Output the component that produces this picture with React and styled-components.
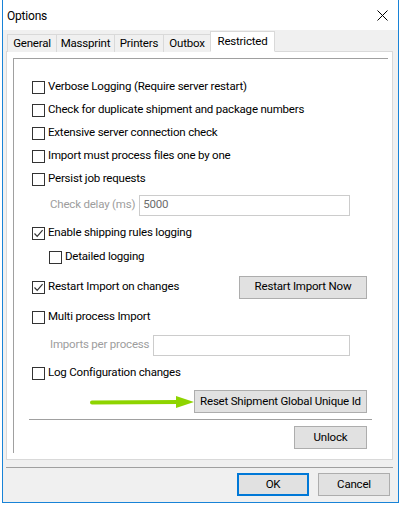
import styled, { createGlobalStyle } from "styled-components";

const GlobalStyle = createGlobalStyle`
  html, body {
    margin: 0;
    padding: 0;
    background: #ffffff;
  }
  body {
    font-family: Roboto, "Noto Sans", sans-serif;
    font-size: 11.5px;
    letter-spacing: -0.2px;
    color: #000;
  }
  * {
    box-sizing: border-box;
  }
`;

const Window = styled.div`
  margin-left: 2px;
  width: 397px;
  height: 503px;
  border: 1px solid #1883d7;
  border-top: none;
  background: #f0f0f0;
  display: flex;
  flex-direction: column;
`;

const TitleBar = styled.div`
  height: 30px;
  background: #ffffff;
  display: flex;
  align-items: center;
  justify-content: space-between;
  padding: 1px 10px 0 4px;
  flex-shrink: 0;
`;

const Title = styled.span`
  font-size: 12px;
  line-height: 1;
`;

const Content = styled.div`
  flex: 1;
  display: flex;
  flex-direction: column;
  padding: 1px 5px 0 3px;
`;

const TabStrip = styled.div`
  display: flex;
  align-items: flex-end;
  height: 21px;
  padding-left: 1px;
  margin-bottom: -1px;
  position: relative;
  z-index: 1;
`;

const Tab = styled.div`
  width: ${(p) => p.$w}px;
  height: ${(p) => (p.$active ? "21px" : "18px")};
  padding-top: ${(p) => (p.$active ? "1px" : "0")};
  margin-left: ${(p) => (p.$first ? "0" : "-1px")};
  border: 1px solid #d9d9d9;
  border-bottom: ${(p) => (p.$active ? "1px solid #ffffff" : "none")};
  background: ${(p) => (p.$active ? "#ffffff" : "#f0f0f0")};
  display: flex;
  align-items: center;
  justify-content: center;
  line-height: 1;
  white-space: nowrap;
  position: relative;
  z-index: ${(p) => (p.$active ? 2 : 1)};
`;

const Page = styled.div`
  height: 409px;
  border: 1px solid #d9d9d9;
  background: #ffffff;
  display: flex;
  flex-direction: column;
`;

const Group = styled.div`
  flex: 1;
  margin: 6px 4px 6px 6px;
  border-left: 1px solid #a0a0a0;
  border-top: 1px solid #a0a0a0;
  display: flex;
  flex-direction: column;
  padding: 17px 21px 0 18px;
`;

const Row = styled.div`
  height: ${(p) => p.$h || 22}px;
  margin-top: ${(p) => p.$mt || 0}px;
  padding-left: ${(p) => p.$indent || 0}px;
  display: flex;
  align-items: center;
  justify-content: ${(p) => (p.$between ? "space-between" : p.$end ? "flex-end" : "flex-start")};
  flex-shrink: 0;
`;

const CheckLabel = styled.label`
  display: flex;
  align-items: center;
  gap: 3px;
  line-height: 1;
  white-space: nowrap;
`;

const Box = styled.span`
  width: 13px;
  height: 13px;
  border: 1px solid #333333;
  background: #ffffff;
  display: inline-flex;
  align-items: center;
  justify-content: center;
  flex-shrink: 0;
`;

const FieldLabel = styled.span`
  color: #9d9d9d;
  white-space: nowrap;
  line-height: 1;
`;

const Field = styled.div`
  flex: 1;
  height: 21px;
  margin-left: 4px;
  margin-right: 17px;
  border: 1px solid #cccccc;
  background: #ffffff;
  color: #6d6d6d;
  display: flex;
  align-items: center;
  padding-left: 3px;
  line-height: 1;
`;

const Button = styled.button`
  width: ${(p) => p.$w}px;
  height: 23px;
  border: 1px solid ${(p) => (p.$default ? "#0078d7" : "#adadad")};
  box-shadow: ${(p) => (p.$default ? "inset 0 0 0 1px #0078d7" : "none")};
  background: #e1e1e1;
  font-family: inherit;
  font-size: 11.5px;
  letter-spacing: -0.2px;
  color: #000;
  padding: 0;
  line-height: 1;
  white-space: nowrap;
  flex-shrink: 0;
`;

const Separator = styled.div`
  height: 1px;
  background: #a0a0a0;
  margin: ${(p) => p.$margin};
  flex-shrink: 0;
`;

const Footer = styled.div`
  display: flex;
  justify-content: flex-end;
  gap: 9px;
  margin-top: 5px;
  padding-right: 3px;
`;

const Check = ({ checked }) => (
  <Box>
    {checked && (
      <svg width="11" height="11" viewBox="0 0 11 11">
        <path d="M1.5 5.5 L4.2 8.3 L9.6 2.2" fill="none" stroke="#333" strokeWidth="1.2" />
      </svg>
    )}
  </Box>
);

const CheckRow = ({ label, checked, mt, indent }) => (
  <Row $mt={mt} $indent={indent}>
    <CheckLabel>
      <Check checked={checked} />
      {label}
    </CheckLabel>
  </Row>
);

const Arrow = () => (
  <svg width="104" height="16" viewBox="0 0 104 16">
    <line x1="2" y1="8.5" x2="90" y2="8" stroke="#8ed400" strokeWidth="4" strokeLinecap="round" />
    <polygon points="86,2 104,8 86,14" fill="#8ed400" />
  </svg>
);

const tabs = [
  { name: "General", w: 50 },
  { name: "Massprint", w: 59 },
  { name: "Printers", w: 50 },
  { name: "Outbox", w: 48 },
  { name: "Restricted", w: 65, active: true },
];

const App = () => {
  return (
    <>
      <GlobalStyle />
      <Window>
        <TitleBar>
          <Title>Options</Title>
          <svg width="11" height="11" viewBox="0 0 11 11">
            <path d="M0.5 0.5 L10.5 10.5 M10.5 0.5 L0.5 10.5" stroke="#000" strokeWidth="1" />
          </svg>
        </TitleBar>
        <Content>
          <TabStrip>
            {tabs.map((t, i) => (
              <Tab key={t.name} $w={t.w} $first={i === 0} $active={t.active}>
                {t.name}
              </Tab>
            ))}
          </TabStrip>
          <Page>
            <Group>
              <CheckRow label="Verbose Logging (Require server restart)" />
              <CheckRow mt={1} label="Check for duplicate shipment and package numbers" />
              <CheckRow mt={1} label="Extensive server connection check" />
              <CheckRow mt={1} label="Import must process files one by one" />
              <CheckRow mt={1} label="Persist job requests" />
              <Row $mt={4} $indent={18}>
                <FieldLabel>Check delay (ms)</FieldLabel>
                <Field>5000</Field>
              </Row>
              <CheckRow mt={6} checked label="Enable shipping rules logging" />
              <CheckRow mt={2} indent={17} label="Detailed logging" />
              <Row $mt={8} $between>
                <CheckLabel>
                  <Check checked />
                  Restart Import on changes
                </CheckLabel>
                <Button $w={128}>Restart Import Now</Button>
              </Row>
              <CheckRow mt={8} label="Multi process Import" />
              <Row $mt={6} $indent={18}>
                <FieldLabel>Imports per process</FieldLabel>
                <Field />
              </Row>
              <CheckRow mt={6} label="Log Configuration changes" />
              <Row $mt={6} $h={23} $end>
                <Arrow />
                <Button $w={173}>Reset Shipment Global Unique Id</Button>
              </Row>
              <Separator $margin="6px -5px 0 -3px" />
              <Row $mt={6} $h={23} $end>
                <Button $w={73}>Unlock</Button>
              </Row>
            </Group>
          </Page>
          <Separator $margin="7px 0 0 0" />
          <Footer>
            <Button $w={72} $default>
              OK
            </Button>
            <Button $w={72}>Cancel</Button>
          </Footer>
        </Content>
      </Window>
    </>
  );
};

export default App;
